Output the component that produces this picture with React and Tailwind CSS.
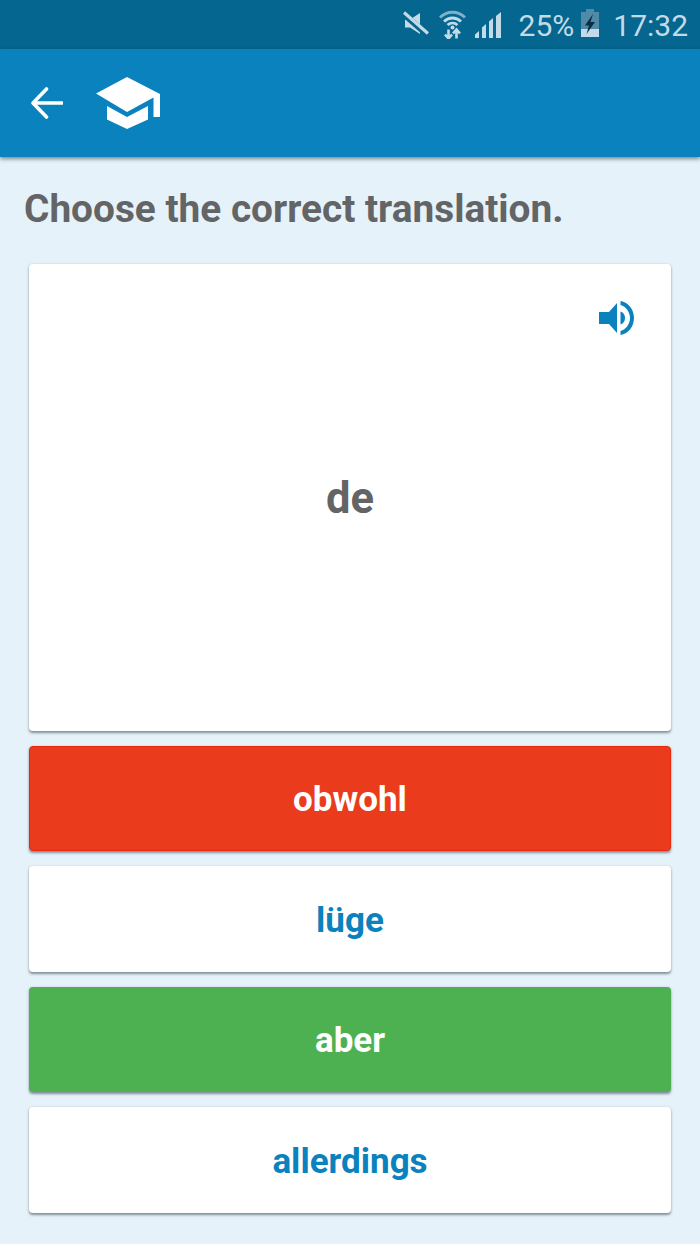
const font = { fontFamily: 'Roboto, sans-serif' };

function Muted() {
  return (
    <svg width="26" height="26" viewBox="0 0 26 26" className="block">
      <path d="M2 8.500h5l10-6.500v21l-10-6.500H2z" fill="#c3dbe8" />
      <path d="M0 2.500l24 21" stroke="#05668f" strokeWidth="6" />
      <path d="M1 1.500l24 21" stroke="#c3dbe8" strokeWidth="3.200" />
    </svg>
  );
}

function Wifi() {
  return (
    <svg width="27" height="29" viewBox="0 0 27 29" className="block">
      <path d="M1 7.500C8 0.500 19 0.500 26 7.500" fill="none" stroke="#7fb0c9" strokeWidth="2.800" />
      <path d="M5 11.500C10 6.800 17 6.800 22 11.500" fill="none" stroke="#c3dbe8" strokeWidth="2.800" />
      <path d="M8.500 15c3-2.600 7-2.600 10 0" fill="none" stroke="#c3dbe8" strokeWidth="2.800" />
      <circle cx="13.500" cy="17.500" r="2" fill="#c3dbe8" />
      <path d="M9.500 19.500v9M6 24.500l3.500 4 3.500-4M17.500 28.500v-9M14 23.500l3.500-4 3.500 4" fill="none" stroke="#c3dbe8" strokeWidth="2.600" />
    </svg>
  );
}

function Signal() {
  return (
    <svg width="26" height="26" viewBox="0 0 26 26" className="block">
      <path d="M0 26v-3.500L4 19v7zM7 26V15.500L11 12v14zM14 26V9.500L18 6v20zM21 26V4l5-4v26z" fill="#c3dbe8" />
    </svg>
  );
}

function Battery() {
  return (
    <svg width="18" height="28" viewBox="0 0 18 28" className="block">
      <path d="M5 0h8v3h5v25H0V3h5z" fill="#4f8aa9" />
      <rect x="0" y="20" width="18" height="8" fill="#c3dbe8" />
      <path d="M12 5L4 16.500h4L5.500 25 14 13h-4.500z" fill="#0b2f42" />
    </svg>
  );
}

function Cap() {
  return (
    <svg width="66" height="54" viewBox="0 0 66 54" className="block">
      <path d="M32 1L65 18v23h-6.500V21.500L32 36 1 17.500z" fill="#fff" />
      <path d="M12 30L32 41 53 30v13.500L32 53 12 43.500z" fill="#fff" />
    </svg>
  );
}

function Speaker() {
  return (
    <svg width="38" height="36" viewBox="0 0 38 36" className="block">
      <path d="M1 12h10L19 3v30l-8-9H1z" fill="#0a82bd" />
      <path d="M22.500 11.500c3 1 4.500 3.500 4.500 6.500s-1.500 5.500-4.500 6.500z" fill="#0a82bd" />
      <path d="M22.500 1c8 1.500 13.500 8.500 13.500 17s-5.500 15.500-13.500 17v-4c5.500-1.500 9.500-7 9.500-13s-4-11.500-9.500-13z" fill="#0a82bd" />
    </svg>
  );
}

function Choice({ children, className }) {
  return (
    <div className={`h-[105.400px] rounded-[4px] flex items-center justify-center pt-[4px] text-[35px] font-bold shadow-[0_1.500px_2.500px_rgba(70,90,105,0.65)] ${className}`}>
      {children}
    </div>
  );
}

export default function App() {
  return (
    <div className="w-[700px] h-[1244px] bg-[#e6f2f9] flex flex-col overflow-hidden" style={font}>
      <div className="h-[49px] bg-[#05668f] flex items-center justify-end pr-[12px] text-[#c3dbe8] text-[30px] leading-none">
        <div className="mr-[10px] mb-[1px]"><Muted /></div>
        <div className="mr-[9px]"><Wifi /></div>
        <div className="mr-[18px]"><Signal /></div>
        <span className="mr-[7px] pt-[3px]">25%</span>
        <div className="mr-[14px] mb-[3px]"><Battery /></div>
        <span className="pt-[3px]">17:32</span>
      </div>
      <div className="h-[108px] bg-[#0a82bd] flex items-center pl-[31px] shadow-[0_2px_4px_rgba(0,0,0,0.45)] relative">
        <svg width="32" height="32" viewBox="0 0 32 32" className="block mr-[32px]">
          <path d="M31 16H2.500M15.500 2L2 16l13.500 14" fill="none" stroke="#fff" strokeWidth="3.600" strokeLinecap="round" strokeLinejoin="round" />
        </svg>
        <Cap />
      </div>
      <h1 className="mt-[28px] ml-[24px] text-[38.800px] leading-[48px] font-bold text-[#636466]">Choose the correct translation.</h1>
      <div className="mx-[29px] mt-[31px] flex flex-col gap-[15px]">
        <div className="h-[467px] bg-white rounded-[4px] pt-[3px] shadow-[0_1.500px_2.500px_rgba(70,90,105,0.65)] relative flex items-center justify-center text-[43.500px] font-bold text-[#636466]">
          <div className="absolute right-[35px] top-[36px]"><Speaker /></div>
          de
        </div>
        <Choice className="bg-[#ea3b1c] border border-[#e6290f] text-white">obwohl</Choice>
        <Choice className="bg-white text-[#0a82bd]">lüge</Choice>
        <Choice className="bg-[#4eb151] text-white">aber</Choice>
        <Choice className="bg-white text-[#0a82bd]">allerdings</Choice>
      </div>
    </div>
  );
}
